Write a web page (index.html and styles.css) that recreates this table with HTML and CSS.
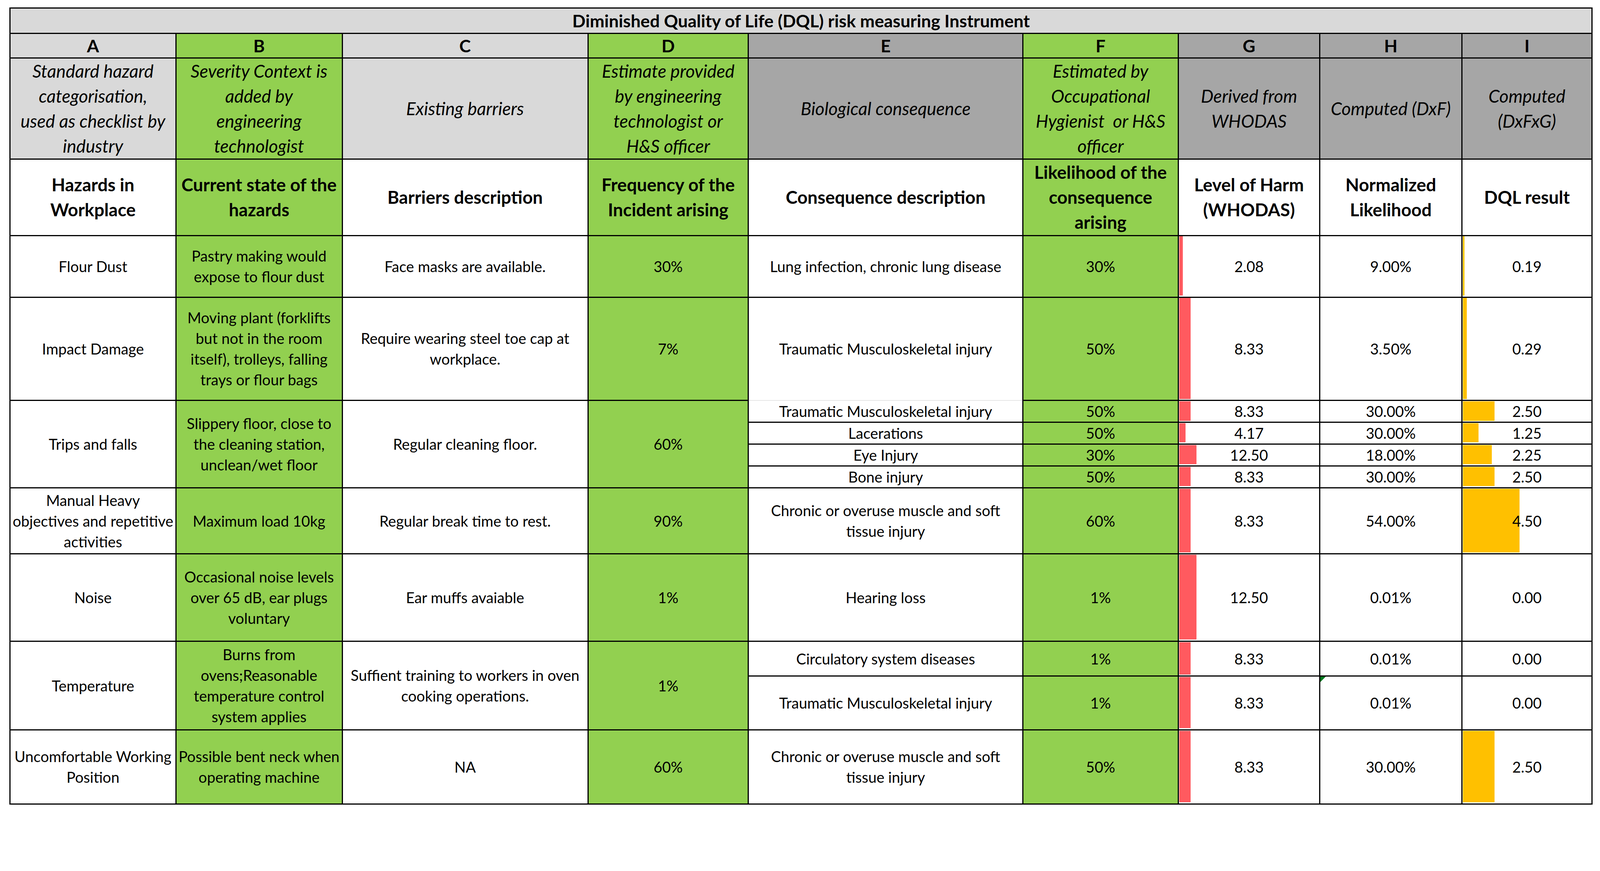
FILE: index.html
```html
<!DOCTYPE html>
<html lang="en">
<head>
<meta charset="utf-8">
<title>Diminished Quality of Life (DQL) risk measuring Instrument</title>
<link rel="stylesheet" href="styles.css">
</head>
<body>
<table class="sheet">
  <colgroup>
    <col class="c-a"><col class="c-b"><col class="c-c"><col class="c-d"><col class="c-e"><col class="c-f"><col class="c-g"><col class="c-h"><col class="c-i">
  </colgroup>
  <tbody>
    <tr class="r-title"><td colspan="9" class="title">Diminished Quality of Life (DQL) risk measuring Instrument</td></tr>
    <tr class="r-letters">
      <td class="lg">A</td><td class="gr">B</td><td class="lg">C</td><td class="gr">D</td><td class="dg">E</td><td class="gr">F</td><td class="dg">G</td><td class="dg">H</td><td class="dg">I</td>
    </tr>
    <tr class="r-desc">
      <td class="lg">Standard hazard<br>categorisation,<br>used as checklist by<br>industry</td>
      <td class="gr">Severity Context is<br>added by<br>engineering<br>technologist</td>
      <td class="lg">Existing barriers</td>
      <td class="gr">Estimate provided<br>by engineering<br>technologist or<br>H&amp;S officer</td>
      <td class="dg">Biological consequence</td>
      <td class="gr">Estimated by<br>Occupational<br>Hygienist&nbsp; or H&amp;S<br>officer</td>
      <td class="dg">Derived from<br>WHODAS</td>
      <td class="dg">Computed (DxF)</td>
      <td class="dg">Computed<br>(DxFxG)</td>
    </tr>
    <tr class="r-head">
      <td>Hazards in<br>Workplace</td>
      <td class="gr">Current state of the<br>hazards</td>
      <td>Barriers description</td>
      <td class="gr">Frequency of the<br>Incident arising</td>
      <td>Consequence description</td>
      <td class="gr">Likelihood of the<br>consequence<br>arising</td>
      <td>Level of Harm<br>(WHODAS)</td>
      <td>Normalized<br>Likelihood</td>
      <td>DQL result</td>
    </tr>

    <tr class="h170">
      <td>Flour Dust</td>
      <td class="gr">Pastry making would<br>expose to flour dust</td>
      <td>Face masks are available.</td>
      <td class="gr">30%</td>
      <td>Lung infection, chronic lung disease</td>
      <td class="gr">30%</td>
      <td class="barcell"><span class="bar red" style="--w:10"></span><span class="val">2.08</span></td>
      <td>9.00%</td>
      <td class="barcell"><span class="bar amber" style="--w:5"></span><span class="val">0.19</span></td>
    </tr>

    <tr class="h285">
      <td>Impact Damage</td>
      <td class="gr">Moving plant (forklifts<br>but not in the room<br>itself), trolleys, falling<br>trays or flour bags</td>
      <td>Require wearing steel toe cap at<br>workplace.</td>
      <td class="gr">7%</td>
      <td class="soft-bottom">Traumatic Musculoskeletal injury</td>
      <td class="gr">50%</td>
      <td class="barcell"><span class="bar red" style="--w:31"></span><span class="val">8.33</span></td>
      <td>3.50%</td>
      <td class="barcell"><span class="bar amber" style="--w:11"></span><span class="val">0.29</span></td>
    </tr>

    <tr class="h59">
      <td rowspan="4">Trips and falls</td>
      <td rowspan="4" class="gr">Slippery floor, close to<br>the cleaning station,<br>unclean/wet floor</td>
      <td rowspan="4">Regular cleaning floor.</td>
      <td rowspan="4" class="gr">60%</td>
      <td class="soft-top">Traumatic Musculoskeletal injury</td>
      <td class="gr">50%</td>
      <td class="barcell"><span class="bar red" style="--w:31"></span><span class="val">8.33</span></td>
      <td>30.00%</td>
      <td class="barcell"><span class="bar amber" style="--w:88"></span><span class="val">2.50</span></td>
    </tr>
    <tr class="h58">
      <td>Lacerations</td>
      <td class="gr">50%</td>
      <td class="barcell"><span class="bar red" style="--w:17"></span><span class="val">4.17</span></td>
      <td>30.00%</td>
      <td class="barcell"><span class="bar amber" style="--w:44"></span><span class="val">1.25</span></td>
    </tr>
    <tr class="h58">
      <td>Eye Injury</td>
      <td class="gr">30%</td>
      <td class="barcell"><span class="bar red" style="--w:48"></span><span class="val">12.50</span></td>
      <td>18.00%</td>
      <td class="barcell"><span class="bar amber" style="--w:80"></span><span class="val">2.25</span></td>
    </tr>
    <tr class="h59">
      <td>Bone injury</td>
      <td class="gr">50%</td>
      <td class="barcell"><span class="bar red" style="--w:31"></span><span class="val">8.33</span></td>
      <td>30.00%</td>
      <td class="barcell"><span class="bar amber" style="--w:88"></span><span class="val">2.50</span></td>
    </tr>

    <tr class="h182">
      <td>Manual Heavy<br>objectives and repetitive<br>activities</td>
      <td class="gr">Maximum load 10kg</td>
      <td>Regular break time to rest.</td>
      <td class="gr">90%</td>
      <td>Chronic or overuse muscle and soft<br>tissue injury</td>
      <td class="gr">60%</td>
      <td class="barcell"><span class="bar red" style="--w:31"></span><span class="val">8.33</span></td>
      <td>54.00%</td>
      <td class="barcell"><span class="bar amber" style="--w:157"></span><span class="val">4.50</span></td>
    </tr>

    <tr class="h241">
      <td>Noise</td>
      <td class="gr">Occasional noise levels<br>over 65 dB, ear plugs<br>voluntary</td>
      <td>Ear muffs avaiable</td>
      <td class="gr">1%</td>
      <td>Hearing loss</td>
      <td class="gr">1%</td>
      <td class="barcell"><span class="bar red" style="--w:48"></span><span class="val">12.50</span></td>
      <td>0.01%</td>
      <td>0.00</td>
    </tr>

    <tr class="h96">
      <td rowspan="2">Temperature</td>
      <td rowspan="2" class="gr">Burns from<br>ovens;Reasonable<br>temperature control<br>system applies</td>
      <td rowspan="2">Suffient training to workers in oven<br>cooking operations.</td>
      <td rowspan="2" class="gr">1%</td>
      <td>Circulatory system diseases</td>
      <td class="gr">1%</td>
      <td class="barcell"><span class="bar red" style="--w:31"></span><span class="val">8.33</span></td>
      <td>0.01%</td>
      <td>0.00</td>
    </tr>
    <tr class="h148">
      <td>Traumatic Musculoskeletal injury</td>
      <td class="gr">1%</td>
      <td class="barcell"><span class="bar red" style="--w:31"></span><span class="val">8.33</span></td>
      <td class="flagged"><span class="flag"></span>0.01%</td>
      <td>0.00</td>
    </tr>

    <tr class="h204">
      <td>Uncomfortable Working<br>Position</td>
      <td class="gr">Possible bent neck when<br>operating machine</td>
      <td>NA</td>
      <td class="gr">60%</td>
      <td>Chronic or overuse muscle and soft<br>tissue injury</td>
      <td class="gr">50%</td>
      <td class="barcell"><span class="bar red" style="--w:31"></span><span class="val">8.33</span></td>
      <td>30.00%</td>
      <td class="barcell"><span class="bar amber" style="--w:88"></span><span class="val">2.50</span></td>
    </tr>
  </tbody>
</table>
</body>
</html>
```

FILE: styles.css
```css
/* One design unit = one pixel of the 4408px-wide reference sheet */
:root {
  --u: calc(100vw / 4408);
}

html {
  overflow: hidden;
}

html, body {
  margin: 0;
  padding: 0;
  background: #ffffff;
}

body {
  padding: calc(20 * var(--u)) 0 0 calc(26 * var(--u));
  font-family: Lato, "Liberation Sans", Arial, sans-serif;
  color: #000000;
}

.sheet {
  border-collapse: collapse;
  table-layout: fixed;
  width: calc(4362 * var(--u));
}

.c-a { width: calc(457 * var(--u)); }
.c-b { width: calc(458 * var(--u)); }
.c-c { width: calc(677 * var(--u)); }
.c-d { width: calc(442 * var(--u)); }
.c-e { width: calc(756 * var(--u)); }
.c-f { width: calc(428 * var(--u)); }
.c-g { width: calc(390 * var(--u)); }
.c-h { width: calc(391 * var(--u)); }
.c-i { width: calc(359 * var(--u)); }

.sheet td {
  border: calc(4 * var(--u)) solid #000000;
  padding: 0 calc(4 * var(--u));
  text-align: center;
  vertical-align: middle;
  font-size: calc(41 * var(--u));
  line-height: calc(57 * var(--u));
  white-space: nowrap;
  overflow: hidden;
}

.sheet .lg { background: #d9d9d9; }
.sheet .dg { background: #a6a6a6; }
.sheet .gr { background: #92d050; }

.r-title { height: calc(70 * var(--u)); }
.sheet .title {
  background: #d9d9d9;
  font-weight: 700;
  font-size: calc(48 * var(--u));
  line-height: calc(56 * var(--u));
}

.r-letters { height: calc(68 * var(--u)); }
.r-letters td {
  font-weight: 700;
  font-size: calc(48 * var(--u));
  line-height: calc(56 * var(--u));
}

.r-desc { height: calc(278 * var(--u)); }
.r-desc td {
  font-style: italic;
  font-size: calc(49 * var(--u));
  line-height: calc(69 * var(--u));
}

.r-head { height: calc(208 * var(--u)); }
.r-head td {
  font-weight: 700;
  font-size: calc(49 * var(--u));
  line-height: calc(69 * var(--u));
}

.h170 { height: calc(170 * var(--u)); }
.h285 { height: calc(285 * var(--u)); }
.h59 { height: calc(59 * var(--u)); }
.h58 { height: calc(58 * var(--u)); }
.h182 { height: calc(182 * var(--u)); }
.h241 { height: calc(241 * var(--u)); }
.h96 { height: calc(96 * var(--u)); }
.h148 { height: calc(148 * var(--u)); }
.h204 { height: calc(204 * var(--u)); }

.sheet .soft-bottom { border-bottom: calc(2 * var(--u)) solid #d0d0d0; }
.sheet .soft-top { border-top: calc(2 * var(--u)) solid #d0d0d0; }

.sheet .barcell,
.sheet .flagged {
  position: relative;
}

/* in-cell data bar (Excel style), width comes from the data via --w */
.bar {
  position: absolute;
  left: calc(1 * var(--u));
  top: calc(1 * var(--u));
  bottom: calc(3 * var(--u));
  width: calc(var(--w) * var(--u));
}
.bar.red { background: #ff5a5f; }
.bar.amber { background: #ffc000; }

.val {
  position: relative;
}

/* green error-indicator corner */
.flag {
  position: absolute;
  left: 0;
  top: 0;
  width: 0;
  height: 0;
  border-top: calc(16 * var(--u)) solid #007a1f;
  border-right: calc(16 * var(--u)) solid transparent;
}
```
